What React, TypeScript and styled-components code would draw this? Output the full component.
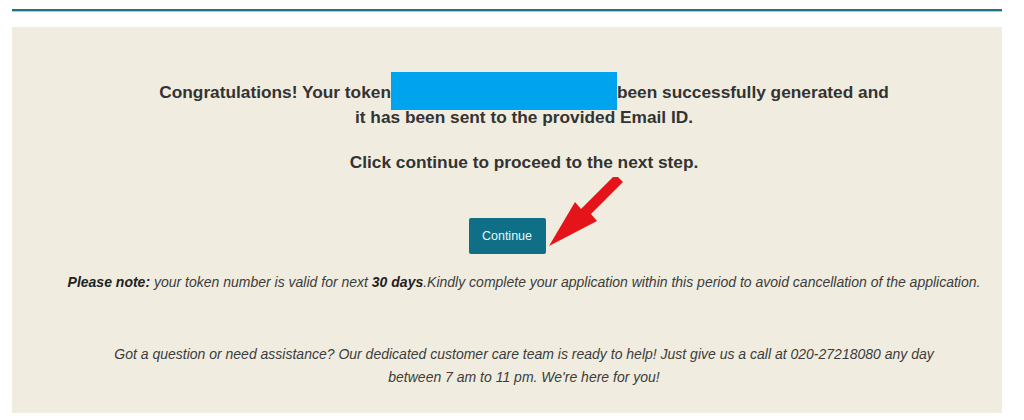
import React from "react";
import styled, { createGlobalStyle } from "styled-components";

const Global = createGlobalStyle`
  html, body { margin: 0; padding: 0; background: #ffffff; }
  body { font-family: "Liberation Sans", Arial, sans-serif; }
`;

const Page = styled.div`
  padding: 9px 22px 6px 12px;
  display: flex;
  flex-direction: column;
  gap: 16px;
`;

const Rule = styled.div`
  height: 2px;
  background: #1f7486;
  box-shadow: 0 1px 0 #8fd3dc;
`;

const Panel = styled.div`
  position: relative;
  background: #f0ede0;
  padding: 53px 0 24px 34px;
  display: flex;
  flex-direction: column;
  align-items: center;
`;

const Heading = styled.p`
  margin: 0;
  font-size: 17.3px;
  font-weight: 700;
  line-height: 25px;
  color: #333333;
  text-align: center;
`;

const Step = styled(Heading)`
  margin-top: 20px;
`;

const Redacted = styled.span`
  display: inline-block;
  width: 226px;
  height: 38px;
  margin: -14px 0 -10px;
  vertical-align: middle;
  background: #00a3ee;
`;

const ButtonRow = styled.div`
  margin: 43px 0 0 -34px;
  display: flex;
  justify-content: center;
`;

const Button = styled.button`
  width: 77px;
  height: 36px;
  border: none;
  border-radius: 2px;
  background: #0e6f86;
  color: #e9f6f8;
  font-family: "Liberation Sans", Arial, sans-serif;
  font-size: 12.5px;
  cursor: pointer;
`;

const Note = styled.p`
  margin: 19px 0 0;
  font-size: 14px;
  font-style: italic;
  line-height: 18px;
  color: #3c3c3c;
  text-align: center;
  b { color: #222; }
`;

const Help = styled.p`
  margin: 52px 0 0;
  font-size: 14px;
  font-style: italic;
  line-height: 23px;
  color: #3c3c3c;
  text-align: center;
`;

const Arrow = styled.svg`
  position: absolute;
  left: 530px;
  top: 145px;
  width: 100px;
  height: 85px;
  pointer-events: none;
`;

export default function App() {
  return (
    <>
      <Global />
      <Page>
        <Rule />
        <Panel>
          <Heading>
            Congratulations! Your token<Redacted />been successfully generated and
            <br />
            it has been sent to the provided Email ID.
          </Heading>
          <Step>Click continue to proceed to the next step.</Step>
          <ButtonRow>
            <Button>Continue</Button>
          </ButtonRow>
          <Arrow viewBox="0 0 100 85">
            <path
              d="M76 5 L81 10 L49 42 L55 49 L7 74 L33 30 L39 37 L71 5 Z"
              fill="#e5141b"
            />
          </Arrow>
          <Note>
            <b>Please note:</b> your token number is valid for next <b>30 days</b>.Kindly complete your
            application within this period to avoid cancellation of the application.
          </Note>
          <Help>
            Got a question or need assistance? Our dedicated customer care team is ready to help! Just give us a call at 020-27218080 any day
            <br />
            between 7 am to 11 pm. We're here for you!
          </Help>
        </Panel>
      </Page>
    </>
  );
}
